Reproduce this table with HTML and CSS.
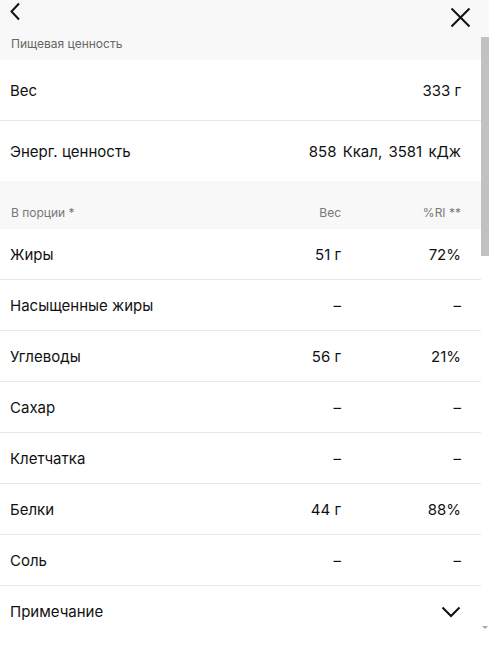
FILE: index.html
```html
<!DOCTYPE html>
<html lang="ru">
<head>
<meta charset="utf-8">
<link rel="stylesheet" href="styles.css">
</head>
<body>
<div class="page">
  <div class="topbar">
    <button class="icon-btn back" aria-label="Назад">
      <svg width="12" height="19" viewBox="0 0 12 19"><path d="M10 1.5 L2.5 9.5 L10 17.5" fill="none" stroke="#111" stroke-width="2"/></svg>
    </button>
    <button class="icon-btn close" aria-label="Закрыть">
      <svg width="21" height="21" viewBox="0 0 21 21"><path d="M1.5 1.5 L19.5 19.5 M19.5 1.5 L1.5 19.5" fill="none" stroke="#111" stroke-width="2"/></svg>
    </button>
  </div>
  <div class="body-row">
    <div class="scroll">
      <div class="section-head">Пищевая ценность</div>
      <div class="kv first">
        <span>Вес</span><span>333 г</span>
      </div>
      <div class="kv">
        <span>Энерг. ценность</span><span class="wide">858 Ккал, 3581 кДж</span>
      </div>
      <div class="table-head">
        <span class="c-name">В порции *</span>
        <span class="c-w">Вес</span>
        <span class="c-ri">%RI **</span>
      </div>
      <div class="trow"><span class="c-name">Жиры</span><span class="c-w">51 г</span><span class="c-ri">72%</span></div>
      <div class="trow"><span class="c-name">Насыщенные жиры</span><span class="c-w">–</span><span class="c-ri">–</span></div>
      <div class="trow"><span class="c-name">Углеводы</span><span class="c-w">56 г</span><span class="c-ri">21%</span></div>
      <div class="trow"><span class="c-name">Сахар</span><span class="c-w">–</span><span class="c-ri">–</span></div>
      <div class="trow"><span class="c-name">Клетчатка</span><span class="c-w">–</span><span class="c-ri">–</span></div>
      <div class="trow"><span class="c-name">Белки</span><span class="c-w">44 г</span><span class="c-ri">88%</span></div>
      <div class="trow"><span class="c-name">Соль</span><span class="c-w">–</span><span class="c-ri">–</span></div>
      <div class="trow note">
        <span class="c-name">Примечание</span>
        <svg class="chev" width="20" height="12" viewBox="0 0 20 12"><path d="M1.5 1.5 L10 10 L18.5 1.5" fill="none" stroke="#111" stroke-width="2"/></svg>
      </div>
    </div>
    <div class="rail">
      <div class="thumb"></div>
      <div class="rail-space"></div>
      <div class="arrow"></div>
    </div>
  </div>
</div>
</body>
</html>
```
FILE: styles.css
```css
* { box-sizing: border-box; }
html, body { margin: 0; height: 100%; }
body {
  font-family: Inter, "Liberation Sans", Arial, sans-serif;
  color: #111;
  background: #f8f8f8;
  overflow: hidden;
}
.page {
  display: flex;
  flex-direction: column;
  height: 100vh;
}
.topbar {
  height: 37px;
  flex: none;
  display: flex;
  justify-content: space-between;
  align-items: flex-start;
  background: #f8f8f8;
}
.icon-btn {
  border: 0;
  background: none;
  padding: 0;
  display: block;
  line-height: 0;
}
.back { margin: 2px 0 0 9px; }
.close { margin: 7px 18px 0 0; }
.body-row {
  flex: 1;
  display: flex;
  min-height: 0;
}
.scroll {
  flex: 1;
  overflow: hidden;
  background: #fff;
}
.rail {
  width: 8px;
  flex: none;
  background: #fff;
  display: flex;
  flex-direction: column;
  align-items: center;
}
.thumb {
  width: 8px;
  height: 219px;
  background: #c1c1c1;
}
.rail-space { flex: 1; }
.arrow {
  width: 0;
  height: 0;
  border-left: 3px solid transparent;
  border-right: 3px solid transparent;
  border-top: 3px solid #a8a8a8;
  margin-bottom: 22px;
}
.section-head {
  background: #f8f8f8;
  height: 23px;
  padding: 0 0 0 11px;
  font-size: 12px;
  color: #666;
  line-height: 13px;
}
.kv {
  display: flex;
  justify-content: space-between;
  align-items: center;
  height: 61px;
  padding: 0 20px 0 10px;
  font-size: 15px;
  border-bottom: 1px solid #e8e8e8;
}
.kv + .kv { height: 60px; border-bottom: 0; }
.wide { word-spacing: 2px; }
.table-head {
  display: flex;
  align-items: center;
  height: 48px;
  padding: 14px 20px 0 11px;
  background: #f8f8f8;
  font-size: 12px;
  color: #777;
}
.trow {
  display: flex;
  align-items: center;
  height: 51px;
  padding: 0 20px 0 10px;
  font-size: 15px;
  border-bottom: 1px solid #e8e8e8;
}
.c-name { flex: 1; }
.c-w { width: 60px; text-align: right; }
.c-ri { width: 120px; text-align: right; }
.note { justify-content: space-between; border-bottom: 0; }
```
